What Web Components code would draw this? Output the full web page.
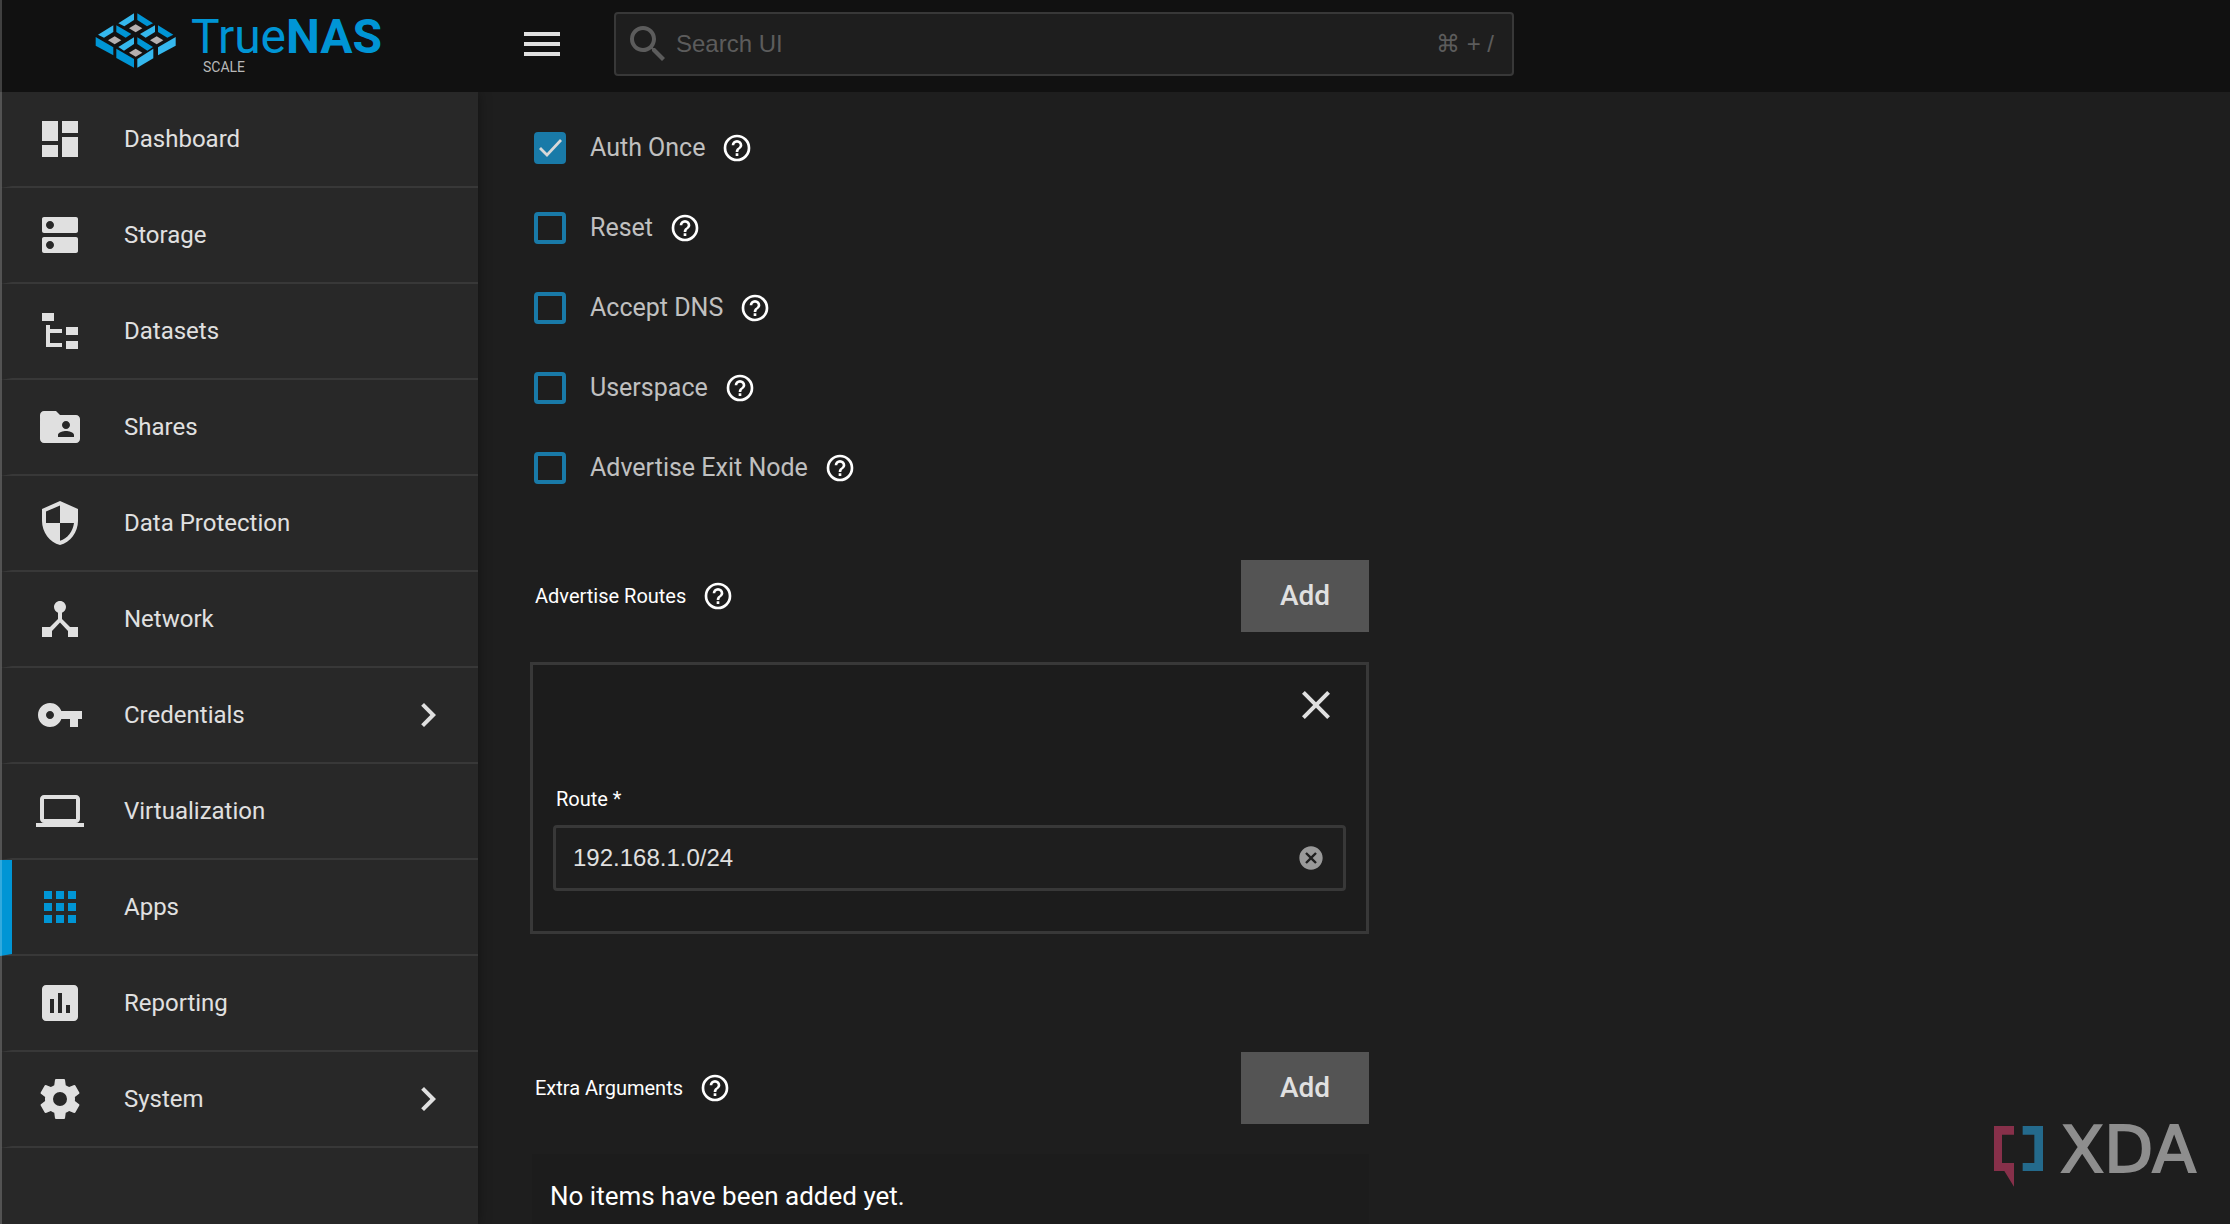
<!DOCTYPE html>
<html lang="en">
<head>
<meta charset="utf-8">
<meta name="viewport" content="width=device-width, initial-scale=1">
<title>TrueNAS SCALE</title>
<style>
  :root {
    --primary: #0095d5;
    --bg: #1e1e1e;
    --bg-card: #1c1c1c;
    --bg-nav: #282828;
    --bg-top: #111111;
    --line: #383838;
    --fg: #e0e0e0;
    --fg-muted: #c0c0c0;
  }
  body {
    margin: 0;
    background: var(--bg);
    color: var(--fg);
    font: 24px/32px Roboto, "Liberation Sans", sans-serif;
  }
</style>
</head>
<body>
<nas-shell>
  <nas-logo slot="brand"></nas-logo>
  <nas-topbar slot="top"></nas-topbar>

  <nas-nav-item slot="nav" icon="dashboard">Dashboard</nas-nav-item>
  <nas-nav-item slot="nav" icon="storage">Storage</nas-nav-item>
  <nas-nav-item slot="nav" icon="datasets">Datasets</nas-nav-item>
  <nas-nav-item slot="nav" icon="shares">Shares</nas-nav-item>
  <nas-nav-item slot="nav" icon="shield">Data Protection</nas-nav-item>
  <nas-nav-item slot="nav" icon="network">Network</nas-nav-item>
  <nas-nav-item slot="nav" icon="key" expandable>Credentials</nas-nav-item>
  <nas-nav-item slot="nav" icon="laptop">Virtualization</nas-nav-item>
  <nas-nav-item slot="nav" icon="apps" active>Apps</nas-nav-item>
  <nas-nav-item slot="nav" icon="reporting">Reporting</nas-nav-item>
  <nas-nav-item slot="nav" icon="cog" expandable>System</nas-nav-item>

  <nas-checkbox checked>Auth Once</nas-checkbox>
  <nas-checkbox>Reset</nas-checkbox>
  <nas-checkbox>Accept DNS</nas-checkbox>
  <nas-checkbox>Userspace</nas-checkbox>
  <nas-checkbox>Advertise Exit Node</nas-checkbox>

  <nas-list label="Advertise Routes">
    <nas-list-item>
      <nas-text-field label="Route *" value="192.168.1.0/24"></nas-text-field>
    </nas-list-item>
  </nas-list>
  <nas-list label="Extra Arguments"></nas-list>
</nas-shell>
<xda-mark></xda-mark>

<script>
/** Icon shapes, all on a 24 unit grid. */
const ICONS = {
  menu: "M3 6h18v2H3zM3 11h18v2H3zM3 16h18v2H3z",
  search: "M9.5,3A6.5,6.5 0 0,1 16,9.5C16,11.11 15.41,12.59 14.44,13.73L14.71,14H15.5L20.5,19L19,20.5L14,15.5V14.71L13.73,14.44C12.59,15.41 11.11,16 9.5,16A6.5,6.5 0 0,1 3,9.5A6.5,6.5 0 0,1 9.5,3M9.5,5C7,5 5,7 5,9.5C5,12 7,14 9.5,14C12,14 14,12 14,9.5C14,7 12,5 9.5,5Z",
  dashboard: "M3 3h8v10H3zM3 15h8v6H3zM13 3h8v6h-8zM13 11h8v10h-8z",
  storage: "M20 13H4c-.55 0-1 .45-1 1v6c0 .55.45 1 1 1h16c.55 0 1-.45 1-1v-6c0-.55-.45-1-1-1zM7 19c-1.1 0-2-.9-2-2s.9-2 2-2 2 .9 2 2-.9 2-2 2zM20 3H4c-.55 0-1 .45-1 1v6c0 .55.45 1 1 1h16c.55 0 1-.45 1-1V4c0-.55-.45-1-1-1zM7 9c-1.1 0-2-.9-2-2s.9-2 2-2 2 .9 2 2-.9 2-2 2z",
  datasets: "M3 3h6v4H3zM15 10h6v4h-6zM15 17h6v4h-6zM5 9h2v2h6v2H7v5h6v2H5z",
  shares: "M20 6h-8l-2-2H4c-1.1 0-1.99.9-1.99 2L2 18c0 1.1.9 2 2 2h16c1.1 0 2-.9 2-2V8c0-1.1-.9-2-2-2zm-5 3c1.1 0 2 .9 2 2s-.9 2-2 2-2-.9-2-2 .9-2 2-2zm4 8h-8v-1c0-1.33 2.67-2 4-2s4 .67 4 2v1z",
  shield: "M12 1L3 5v6c0 5.55 3.84 10.74 9 12 5.16-1.26 9-6.45 9-12V5l-9-4zm0 10.99h7c-.53 4.12-3.28 7.79-7 8.94V12H5V6.3l7-3.11v8.8z",
  network: "M17 16l-4-4V8.82C14.16 8.4 15 7.3 15 6c0-1.66-1.34-3-3-3S9 4.34 9 6c0 1.3.84 2.4 2 2.82V12l-4 4H3v5h5v-3.05l4-4.2 4 4.2V21h5v-5h-4z",
  key: "M12.65 10C11.83 7.67 9.61 6 7 6c-3.31 0-6 2.69-6 6s2.69 6 6 6c2.61 0 4.83-1.67 5.65-4H17v4h4v-4h2v-4H12.65zM7 14c-1.1 0-2-.9-2-2s.9-2 2-2 2 .9 2 2-.9 2-2 2z",
  laptop: "M20 18c1.1 0 1.99-.9 1.99-2L22 6c0-1.1-.9-2-2-2H4c-1.1 0-2 .9-2 2v10c0 1.1.9 2 2 2H0v2h24v-2h-4zM4 6h16v10H4V6z",
  apps: "M4 4h4v4H4zM10 4h4v4h-4zM16 4h4v4h-4zM4 10h4v4H4zM10 10h4v4h-4zM16 10h4v4h-4zM4 16h4v4H4zM10 16h4v4h-4zM16 16h4v4h-4z",
  reporting: "M19 3H5c-1.1 0-2 .9-2 2v14c0 1.1.9 2 2 2h14c1.1 0 2-.9 2-2V5c0-1.1-.9-2-2-2zM9 17H7v-7h2v7zm4 0h-2V7h2v10zm4 0h-2v-4h2v4z",
  cog: "M12,15.5A3.5,3.5 0 0,1 8.5,12A3.5,3.5 0 0,1 12,8.5A3.5,3.5 0 0,1 15.5,12A3.5,3.5 0 0,1 12,15.5M19.43,12.97C19.47,12.65 19.5,12.33 19.5,12C19.5,11.67 19.47,11.34 19.43,11L21.54,9.37C21.73,9.22 21.78,8.95 21.66,8.73L19.66,5.27C19.54,5.05 19.27,4.96 19.05,5.05L16.56,6.05C16.04,5.66 15.5,5.32 14.87,5.07L14.5,2.42C14.46,2.18 14.25,2 14,2H10C9.75,2 9.54,2.18 9.5,2.42L9.13,5.07C8.5,5.32 7.96,5.66 7.44,6.05L4.95,5.05C4.73,4.96 4.46,5.05 4.34,5.27L2.34,8.73C2.21,8.95 2.27,9.22 2.46,9.37L4.57,11C4.53,11.34 4.5,11.67 4.5,12C4.5,12.33 4.53,12.65 4.57,12.97L2.46,14.63C2.27,14.78 2.21,15.05 2.34,15.27L4.34,18.73C4.46,18.95 4.73,19.03 4.95,18.95L7.44,17.94C7.96,18.34 8.5,18.68 9.13,18.93L9.5,21.58C9.54,21.82 9.75,22 10,22H14C14.25,22 14.46,21.82 14.5,21.58L14.87,18.93C15.5,18.67 16.04,18.34 16.56,17.94L19.05,18.95C19.27,19.03 19.54,18.95 19.66,18.73L21.66,15.27C21.78,15.05 21.73,14.78 21.54,14.63L19.43,12.97Z",
  chevron: "M8.59 16.58L13.17 12 8.59 7.41 10 6l6 6-6 6z",
  help: "M11,18H13V16H11V18M12,2A10,10 0 0,0 2,12A10,10 0 0,0 12,22A10,10 0 0,0 22,12A10,10 0 0,0 12,2M12,20C7.59,20 4,16.41 4,12C4,7.59 7.59,4 12,4C16.41,4 20,7.59 20,12C20,16.41 16.41,20 12,20M12,6A4,4 0 0,0 8,10H10A2,2 0 0,1 12,8A2,2 0 0,1 14,10C14,12 11,11.75 11,15H13C13,12.75 16,12.5 16,10A4,4 0 0,0 12,6Z",
  close: "M19,6.41L17.59,5L12,10.59L6.41,5L5,6.41L10.59,12L5,17.59L6.41,19L12,13.41L17.59,19L19,17.59L13.41,12L19,6.41Z",
  clear: "M12,2C17.53,2 22,6.47 22,12C22,17.53 17.53,22 12,22C6.47,22 2,17.53 2,12C2,6.47 6.47,2 12,2M15.59,7L12,10.59L8.41,7L7,8.41L10.59,12L7,15.59L8.41,17L12,13.41L15.59,17L17,15.59L13.41,12L17,8.41L15.59,7Z",
};

const BASE = `
  *, *::before, *::after { box-sizing: border-box; }
  button, input { margin: 0; padding: 0; border: 0; background: none; color: inherit; font: inherit; }
  button { cursor: pointer; }
`;

/** Attaches an open shadow root holding the shared reset, the styles and the markup. */
class NasElement extends HTMLElement {
  constructor() {
    super();
    this.attachShadow({ mode: "open" });
  }

  connectedCallback() {
    this.shadowRoot.innerHTML = `<style>${BASE}${this.styles()}</style>${this.render()}`;
  }

  styles() { return ""; }
  render() { return ""; }
}

/** <nas-icon name="..."> size comes from --size (default 48px). */
class NasIcon extends NasElement {
  styles() {
    return `
      :host { display: block; flex: none; width: var(--size, 48px); height: var(--size, 48px); }
      svg { display: block; width: 100%; height: 100%; fill: currentColor; }
    `;
  }
  render() {
    return `<svg viewBox="0 0 24 24" aria-hidden="true"><path fill-rule="evenodd" d="${ICONS[this.getAttribute("name")]}"/></svg>`;
  }
}

class NasShell extends NasElement {
  styles() {
    return `
      :host {
        display: grid;
        grid-template: auto minmax(0, 1fr) / 478px minmax(0, 1fr);
        height: 100vh;
      }
      :host::before {
        content: "";
        position: fixed;
        inset: 0 auto 0 0;
        width: 2px;
        background: rgba(255, 255, 255, 0.2);
        z-index: 2;
      }
      .brand, .top { background: var(--bg-top); }
      .top { min-width: 0; }
      nav { background: var(--bg-nav); box-shadow: 0 0 12px rgba(0, 0, 0, 0.4); clip-path: inset(0 -16px 0 0); }
      main {
        overflow: auto;
        scrollbar-width: none;
        padding: 40px 22px 40px 52px;
      }
      form { width: 50%; display: flex; flex-direction: column; }
    `;
  }
  render() {
    return `
      <div class="brand"><slot name="brand"></slot></div>
      <header class="top"><slot name="top"></slot></header>
      <nav aria-label="Main"><slot name="nav"></slot></nav>
      <main><form><slot></slot></form></main>
    `;
  }
}

class NasLogo extends NasElement {
  styles() {
    return `
      a {
        display: flex;
        gap: 14px;
        padding: 12px 0 0 95px;
        color: inherit;
        text-decoration: none;
      }
      svg { width: 82px; height: 58px; flex: none; }
      .name { color: var(--primary); font-size: 48px; line-height: 50px; }
      .name b { font-weight: 700; }
      .edition { padding-left: 12px; color: #b8b8b8; font-size: 14px; line-height: 10px; }
    `;
  }
  render() {
    return `
      <a href="#" aria-label="TrueNAS SCALE">
        <svg viewBox="47 37 244 174" aria-hidden="true">
          <g fill="#35b8ee">
            <path d="M163 41v20l-29 19-18-9z"/>
            <path d="M101 77v20l-28 17-18-9z"/>
            <path d="M226 77v20l-28 17-17-11z"/>
            <path d="M163 113v20l-30 20-17-11z"/>
            <path d="M173 178v26l48-28v-29z"/>
            <path d="M235 143v24l53-29v-26z"/>
          </g>
          <g fill="#0095d5">
            <path d="M173 41v20l29 19 18-9z"/>
            <path d="M235 77v20l28 17 18-9z"/>
            <path d="M110 77v20l28 17 17-11z"/>
            <path d="M173 113v20l30 20 17-11z"/>
            <path d="M163 178v26l-53-29v-28z"/>
            <path d="M101 143v24l-53-29v-26z"/>
          </g>
          <g fill="#b5b0b0">
            <path d="M168 74l20 12-20 12-20-12z"/>
            <path d="M105 110l20 12-20 12-20-12z"/>
            <path d="M231 110l20 12-20 12-20-12z"/>
            <path d="M168 147l20 12-20 12-20-12z"/>
          </g>
        </svg>
        <div>
          <div class="name">True<b>NAS</b></div>
          <div class="edition">SCALE</div>
        </div>
      </a>
    `;
  }
}

class NasTopbar extends NasElement {
  styles() {
    return `
      :host { display: flex; align-items: center; gap: 48px; padding: 12px 40px 16px; }
      label {
        display: flex;
        align-items: center;
        flex: 0 1 900px;
        height: 64px;
        padding: 0 18px 0 8px;
        border: 2px solid var(--line);
        border-radius: 4px;
        background: var(--bg);
        color: #5c5c5c;
        font-family: "Liberation Sans", "DejaVu Sans", sans-serif;
      }
      input { flex: 1; min-width: 0; height: 100%; padding-left: 4px; outline: 0; }
      input::placeholder { color: inherit; opacity: 1; }
      kbd { font: inherit; }
    `;
  }
  render() {
    return `
      <button type="button" aria-label="Toggle menu"><nas-icon name="menu"></nas-icon></button>
      <label>
        <nas-icon name="search"></nas-icon>
        <input type="text" placeholder="Search UI" aria-label="Search UI">
        <kbd>⌘ + /</kbd>
      </label>
    `;
  }
}

class NasNavItem extends NasElement {
  styles() {
    return `
      a {
        display: flex;
        align-items: center;
        gap: 40px;
        height: 96px;
        padding: 0 26px 0 24px;
        border: solid transparent;
        border-width: 0 0 2px 12px;
        border-bottom-color: var(--line);
        color: inherit;
        text-decoration: none;
      }
      span { flex: 1; }
      :host([active]) a { border-left-color: var(--primary); }
      :host([active]) nas-icon { color: var(--primary); }
    `;
  }
  render() {
    return `
      <a href="#">
        <nas-icon name="${this.getAttribute("icon")}"></nas-icon>
        <span><slot></slot></span>
        ${this.hasAttribute("expandable") ? `<nas-icon name="chevron"></nas-icon>` : ""}
      </a>
    `;
  }
}

class NasHelp extends NasElement {
  styles() {
    return `
      :host { display: block; --size: 32px; color: #fff; }
      button { display: block; }
    `;
  }
  render() {
    return `<button type="button" aria-label="Help"><nas-icon name="help"></nas-icon></button>`;
  }
}

class NasCheckbox extends NasElement {
  styles() {
    return `
      :host {
        display: flex;
        align-items: center;
        gap: 16px;
        height: 32px;
        margin-bottom: 48px;
        padding-left: 4px;
        color: var(--fg-muted);
        font-size: 25px;
      }
      label { display: flex; align-items: center; gap: 24px; }
      input {
        appearance: none;
        width: 32px;
        height: 32px;
        border: 4px solid #197aa8;
        border-radius: 4px;
      }
      input:checked { background: #197aa8; }
      input:checked::before {
        content: "";
        display: block;
        width: 24px;
        height: 24px;
        background: #d8d8d8;
        clip-path: polygon(1px 13px, 3px 11px, 9px 17px, 22px 3px, 24px 5px, 9px 21px);
      }
    `;
  }
  render() {
    return `
      <label><input type="checkbox"${this.hasAttribute("checked") ? " checked" : ""}><slot></slot></label>
      <nas-help></nas-help>
    `;
  }
}

/** Label, help and Add button over the list's items. */
class NasList extends NasElement {
  styles() {
    return `
      :host { display: block; margin: 28px 0 90px; }
      .head { display: flex; align-items: center; gap: 16px; margin-bottom: 30px; padding-left: 5px; color: #fff; font-size: 20px; }
      .head button {
        width: 128px;
        height: 72px;
        margin-left: auto;
        background: #545454;
        color: var(--fg);
        font-size: 28px;
        font-weight: 500;
      }
      .empty { margin-left: 2px; padding: 26px 18px; background: var(--bg-card); color: #fff; font-size: 26px; }
    `;
  }
  render() {
    const empty = this.childElementCount === 0;
    return `
      <div class="head">
        <span>${this.getAttribute("label")}</span>
        <nas-help></nas-help>
        <button type="button">Add</button>
      </div>
      ${empty ? `<div class="empty">No items have been added yet.</div>` : `<slot></slot>`}
    `;
  }
}

class NasListItem extends NasElement {
  styles() {
    return `
      :host {
        display: block;
        padding: 16px 20px 40px;
        border: 3px solid var(--line);
        background: var(--bg-card);
        box-sizing: border-box;
      }
      button { display: block; margin: 0 6px 54px auto; }
    `;
  }
  render() {
    return `
      <button type="button" aria-label="Remove"><nas-icon name="close"></nas-icon></button>
      <slot></slot>
    `;
  }
}

class NasTextField extends NasElement {
  styles() {
    return `
      :host { display: block; }
      label { display: block; margin-bottom: 10px; padding-left: 3px; color: #fff; font-size: 20px; }
      .box {
        display: flex;
        align-items: center;
        height: 66px;
        padding: 0 18px 0 17px;
        border: 3px solid var(--line);
        border-radius: 4px;
        background: var(--bg);
      }
      input { flex: 1; min-width: 0; outline: 0; font-family: "Liberation Sans", sans-serif; }
      button { --size: 28px; color: #999; }
    `;
  }
  render() {
    return `
      <label for="field">${this.getAttribute("label")}</label>
      <div class="box">
        <input id="field" type="text" value="${this.getAttribute("value")}">
        <button type="button" aria-label="Clear"><nas-icon name="clear"></nas-icon></button>
      </div>
    `;
  }
}

/** Watermark in the lower right corner. */
class XdaMark extends NasElement {
  styles() {
    return `
      :host {
        position: fixed;
        right: 34px;
        bottom: 37px;
        display: flex;
        gap: 16px;
        color: #8e8e8e;
        font: 64px/48px "DejaVu Sans", sans-serif;
        -webkit-text-stroke: 2px #8e8e8e;
      }
      svg { width: 50px; height: 61px; }
    `;
  }
  render() {
    return `
      <svg viewBox="92 78 150 183" aria-hidden="true">
        <path fill="#87304a" d="M92 78h60v26h-36v85h36v71l-29-47H92z"/>
        <path fill="#246a8c" d="M178 78h61v135h-61v-24h35v-85h-35z"/>
      </svg>
      <span>XDA</span>
    `;
  }
}

customElements.define("nas-icon", NasIcon);
customElements.define("nas-shell", NasShell);
customElements.define("nas-logo", NasLogo);
customElements.define("nas-topbar", NasTopbar);
customElements.define("nas-nav-item", NasNavItem);
customElements.define("nas-help", NasHelp);
customElements.define("nas-checkbox", NasCheckbox);
customElements.define("nas-list", NasList);
customElements.define("nas-list-item", NasListItem);
customElements.define("nas-text-field", NasTextField);
customElements.define("xda-mark", XdaMark);
</script>
</body>
</html>
